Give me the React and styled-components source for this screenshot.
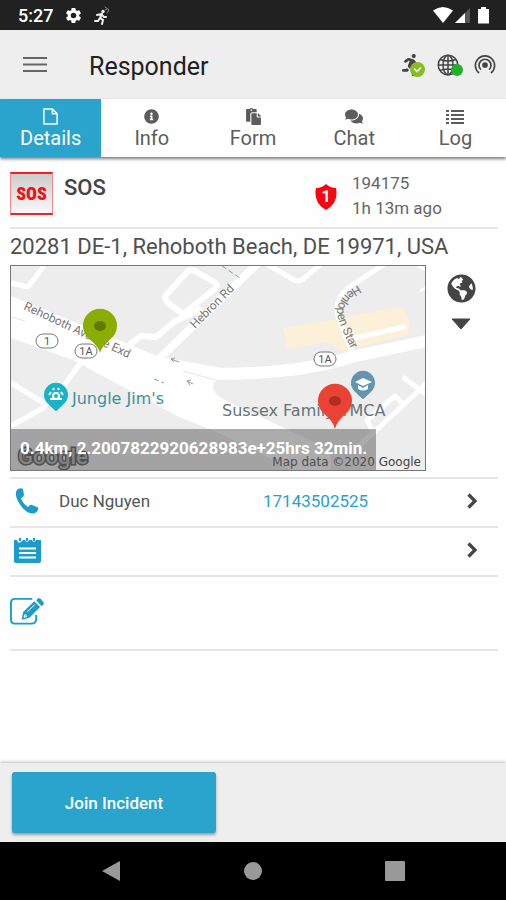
import { useState } from 'react';
import styled, { createGlobalStyle } from 'styled-components';
import { FaComments, FaGlobeAmericas, FaInfoCircle, FaPaste, FaRunning } from 'react-icons/fa';
import { MdSettings } from 'react-icons/md';

const GlobalStyle = createGlobalStyle`
  * {
    box-sizing: border-box;
  }

  body {
    margin: 0;
    background: #fefefe;
    color: #555;
    font-family: Roboto, "Liberation Sans", sans-serif;
  }

  button {
    padding: 0;
    border: none;
    background: none;
    color: inherit;
    font: inherit;
    cursor: pointer;
  }
`;

const Screen = styled.div`
  display: flex;
  flex-direction: column;
  min-height: 100vh;
`;

const StatusBar = styled.div`
  display: flex;
  align-items: center;
  gap: 11px;
  height: 30px;
  padding: 0 15px 0 18px;
  background: #212121;
  color: #fff;
`;

const Clock = styled.span`
  font-size: 18px;
  font-weight: 500;
`;

const StatusRight = styled.div`
  display: flex;
  align-items: center;
  margin-left: auto;
`;

const AppBar = styled.header`
  display: flex;
  align-items: center;
  height: 69px;
  padding: 0 10px 0 23px;
  background: #eee;
`;

const MenuButton = styled.button`
  display: flex;
  width: 24px;
  margin-right: 42px;
`;

const Title = styled.h1`
  margin: 3px 0 0;
  color: #212121;
  font-size: 25px;
  font-weight: 400;
`;

const BarIcons = styled.div`
  display: flex;
  gap: 15px;
  margin-left: auto;
`;

const BarButton = styled.button`
  position: relative;
  display: flex;
  color: #444;
`;

const StatusBadge = styled.span`
  position: absolute;
  right: ${props => (props.$small ? '-4px' : '-3px')};
  bottom: ${props => (props.$small ? '0' : '-1px')};
  display: flex;
  align-items: center;
  justify-content: center;
  width: ${props => (props.$small ? '12px' : '15px')};
  height: ${props => (props.$small ? '12px' : '15px')};
  border-radius: 50%;
  background: ${props => (props.$small ? '#1fb22c' : '#86be22')};
`;

const Tabs = styled.nav`
  position: relative;
  display: flex;
  height: 58px;
  background: #fff;
  box-shadow: 0 2px 3px rgba(0, 0, 0, 0.5);
`;

const Tab = styled.button`
  display: flex;
  flex: 1;
  flex-direction: column;
  align-items: center;
  padding-top: 9px;
  background: ${props => (props.$active ? '#2aa3cd' : '#fff')};
  color: ${props => (props.$active ? '#fff' : '#5c5c5c')};
  font-size: 20px;
  line-height: 26px;

  svg {
    height: 17px;
  }
`;

const Content = styled.main`
  flex: 1;
  padding: 0 8px 0 10px;
`;

const Summary = styled.section`
  display: flex;
  align-items: center;
  height: 72px;
  border-bottom: 2px solid #e6e6e6;
`;

const SosBadge = styled.div`
  display: flex;
  align-items: center;
  justify-content: center;
  width: 43px;
  height: 43px;
  margin-top: 3px;
  border: 1px solid #f58a8a;
  border-top: 2px solid #e22;
  border-bottom: 2px solid #e22;
  background: linear-gradient(#ccc, #f8f8f8);
  color: #f01018;
  font-family: "Roboto Condensed", Roboto, "Liberation Sans", sans-serif;
  font-size: 18px;
  font-weight: 900;
`;

const IncidentType = styled.h2`
  align-self: flex-start;
  flex: 1;
  margin: 18px 0 0 11px;
  color: #444;
  font-size: 22px;
  font-weight: 500;
  line-height: 26px;
`;

const Meta = styled.div`
  flex: none;
  width: 146px;
  margin: 8px 0 0 15px;
  color: #666;
  font-size: 17px;
  line-height: 25px;
`;

const ShieldBox = styled.span`
  display: flex;
  padding-top: 9px;
`;

const Address = styled.p`
  margin: 0;
  color: #505050;
  font-size: 22px;
  line-height: 36px;
`;

const MapRow = styled.section`
  display: flex;
  padding-bottom: 6px;
  border-bottom: 2px solid #e6e6e6;
`;

const MapFrame = styled.div`
  position: relative;
  flex: 1;
  border: 1px solid #777;

  > svg {
    display: block;
    width: 100%;
  }
`;

const Distance = styled.div`
  position: absolute;
  bottom: 0;
  left: 0;
  height: 41px;
  padding: 0 9px;
  background: rgba(90, 90, 90, 0.5);
  color: #fff;
  font-size: 17px;
  font-weight: 700;
  line-height: 38px;
  white-space: nowrap;
`;

const MapTools = styled.div`
  display: flex;
  flex-direction: column;
  align-items: center;
  gap: 15px;
  width: 72px;
  padding: 9px 2px 0 0;
  color: #444;

  button {
    display: flex;
  }
`;

const Row = styled.div`
  display: flex;
  align-items: center;
  height: ${props => (props.$tall ? '74px' : '49px')};
  padding: 0 20px 4px 0;
  border-bottom: 2px solid #e6e6e6;
  color: #555;
  font-size: 17px;
`;

const RowIcon = styled.span`
  display: flex;
  justify-content: ${props => (props.$edge ? 'flex-start' : 'center')};
  width: 34px;
  color: #1c9cc9;
`;

const ContactName = styled.span`
  flex: 1;
  margin-left: 15px;
`;

const ContactPhone = styled.a`
  flex: 1;
  color: #2b9fce;
  text-decoration: none;
`;

const RowButton = styled.button`
  display: flex;
  margin-left: auto;
`;

const Footer = styled.footer`
  height: 79px;
  padding: 9px 12px;
  background: #eee;
  box-shadow: 0 -1px 3px rgba(0, 0, 0, 0.25);
`;

const JoinButton = styled.button`
  width: 204px;
  height: 61px;
  border-radius: 3px;
  background: #2aa3cd;
  box-shadow: 0 2px 3px rgba(0, 0, 0, 0.35);
  color: #fff;
  font-size: 17px;
  font-weight: 500;
`;

const SystemNav = styled.div`
  position: relative;
  display: flex;
  align-items: center;
  justify-content: space-between;
  height: 58px;
  padding: 0 20%;
  background: #000;

  button {
    display: flex;
  }
`;

function MenuIcon() {
  return (
    <svg width="24" height="18" viewBox="0 0 24 18">
      <path d="M0 2h24M0 8.500h24M0 15h24" stroke="#666" strokeWidth="2.200" />
    </svg>
  );
}

function SignalRunnerIcon() {
  return (
    <svg width="16" height="19" viewBox="0 0 16 19" fill="none" stroke="#eee" strokeLinecap="round">
      <circle cx="9" cy="5.500" r="1.700" fill="#eee" stroke="none" />
      <path d="M8 8l-2 4 3 2-1 4M6 12l-2 3H1M3 9l4-1 3 3h2" strokeWidth="2" />
      <path d="M11 4l2-1M11 1l4 3-2 3" strokeWidth="1" stroke="#888" />
    </svg>
  );
}

function RadioIcons() {
  return (
    <svg width="58" height="20" viewBox="0 0 58 20">
      <path d="M0 5.500Q10-1.500 20 5.500L10 18z" fill="#fff" />
      <path d="M37 3v15H22z" fill="#555" />
      <path d="M32 8v10H22z" fill="#fff" />
      <path d="M48 2h5v2h3v14.500H45V4h3z" fill="#fff" />
    </svg>
  );
}

function GridGlobeIcon() {
  return (
    <svg width="22" height="22" viewBox="0 0 22 22" fill="none" stroke="currentColor" strokeWidth="1.500">
      <circle cx="11" cy="11" r="9.800" />
      <ellipse cx="11" cy="11" rx="5" ry="9.800" />
      <path d="M11 1v20M1 11h20M3 5.500q8 3 16 0M3 16.500q8-3 16 0" />
    </svg>
  );
}

function BeaconIcon() {
  return (
    <svg width="22" height="22" viewBox="0 0 22 22" fill="none" stroke="currentColor" strokeWidth="1.700">
      <path d="M5 19a9.600 9.600 0 1 1 12 0" />
      <path d="M7 15.700a6 6 0 1 1 8 0" />
      <circle cx="11" cy="11" r="2" fill="currentColor" />
    </svg>
  );
}

function FileIcon() {
  return (
    <svg width="17" height="18" viewBox="0 0 17 18" fill="none" stroke="currentColor" strokeWidth="1.600" strokeLinejoin="round">
      <path d="M1.500 1h9l5 5v11h-14zM10.500 1v5h5" />
    </svg>
  );
}

function ListIcon() {
  return (
    <svg width="18" height="17" viewBox="0 0 18 17" stroke="currentColor" strokeWidth="2">
      <path d="M0 3h3M0 7h3M0 11h3M0 15h3M5 3h13M5 7h13M5 11h13M5 15h13" />
    </svg>
  );
}

function ShieldIcon() {
  return (
    <svg width="22" height="26" viewBox="0 0 22 26">
      <path d="M11 0q4 4 10 4 3 15-10 22Q-2 19 1 4q6 0 10-4z" fill="#f90510" />
      <text x="11" y="18" textAnchor="middle" fill="#fff" fontSize="16" fontWeight="700">1</text>
    </svg>
  );
}

function CallIcon() {
  return (
    <svg width="24" height="26" viewBox="0 0 24 26" fill="currentColor">
      <path d="M3 1Q6-.5 8 1l1 6q0 2-3 3 2 6 7 9 2-3 4-2l5 2q2 1 1 3-1 3-4 3.500Q12 26 6.500 18.500 0 10 1 4q.5-2 2-3z" />
    </svg>
  );
}

function NotepadIcon() {
  return (
    <svg width="28" height="26" viewBox="0 0 28 26">
      <path d="M1 3h3q1 4 4 2l2-2h2q2 4 4 0h3q2 4 4 0h5v21q0 2-2 2H3q-2 0-2-2z" fill="currentColor" />
      <path d="M7 1v3M14 1v3M21 1v3" stroke="currentColor" strokeWidth="2" />
      <path d="M6 11.500h17M6 16h17M6 20.500h17" stroke="#fff" strokeWidth="2" />
    </svg>
  );
}

function EditIcon() {
  return (
    <svg width="35" height="28" viewBox="0 0 35 28" fill="none" stroke="currentColor">
      <path d="M23 1.500H5Q1 1.500 1 5.500v17Q1 27 5 27h17q5 0 5-5v-4" strokeWidth="2" />
      <path d="M12 23l1.500-8L25 4l6 6-11 11z" fill="currentColor" stroke="none" />
      <path d="M27 3l2-2q1-.5 2 0l3.500 4q.5 1 0 2l-2 2z" fill="currentColor" stroke="none" />
      <path d="M17.500 15l8-7.500M14.500 20.500l1-3 2 2z" stroke="#fff" />
    </svg>
  );
}

function ChevronIcon() {
  return (
    <svg width="11" height="16" viewBox="0 0 11 16" fill="none" stroke="#444" strokeWidth="3.200">
      <path d="M1.500 1.500L8 8l-6.500 6.500" />
    </svg>
  );
}

function Pin({ x, y, r, h, fill, dot }) {
  return (
    <g transform={`translate(${x} ${y})`}>
      <path
        d={`M0 ${h}Q-1 ${r + 4} ${-r * 0.75} ${r * 0.65}A${r} ${r} 0 1 1 ${r * 0.75} ${r * 0.65}Q1 ${r + 4} 0 ${h}z`}
        fill={fill}
      />
      {dot && <ellipse rx="6" ry="5" fill={dot} />}
    </g>
  );
}

function RouteShield({ x, y, label }) {
  return (
    <g>
      <rect x={x - 11} y={y - 7} width="22" height="14" rx="7" fill="#fff" stroke="#777" />
      <text x={x} y={y + 4} textAnchor="middle" fill="#555" fontSize="11">{label}</text>
    </g>
  );
}

function IncidentMap() {
  return (
    <svg viewBox="0 0 414 204" role="img" aria-label="Incident map">
      <rect width="414" height="204" fill="#ededed" />
      <path d="M272 62l120-21 6 14-1 14-67 16-16-9-38 7z" fill="#fdf0d9" />
      <g fill="none" stroke="#fff" strokeLinejoin="round">
        <path d="M0 17l17 4L33 0" strokeWidth="5" />
        <path d="M146 95L249-5" strokeWidth="8" />
        <path d="M177 5l-22 24q-2 4 2 8l15 11 32-25q4-4-1-7L184 5q-4-2-7 0z" strokeWidth="6" />
        <path d="M184 40l12 13M190 43l-17 8-10 5-18 15-15-1-12 9" strokeWidth="6" />
        <path d="M256-2l27 16q5 2 9-1l18-15" strokeWidth="5" />
        <path d="M375-3l-35 23q-18 12-13 30 8 22 17 43" strokeWidth="5" />
        <path d="M344 72l49-11" strokeWidth="5" strokeLinecap="round" />
        <path d="M403-2l12 6M409 25l6-3" strokeWidth="3" />
        <path d="M200 108q90 0 140-17l76-16" strokeWidth="12" />
        <path d="M73 92L52 121 32 142 0 160M0 117l33 20" strokeWidth="5" />
        <path d="M416 117L347 181M416 129l-24-18M361 164l-5-10 28-24 9 9" strokeWidth="5" />
      </g>
      <path d="M0 30l146 60 70 13v8q-14 2-14 10t18 16l100 47v20h-40q-60-34-112-53L62 94 0 72z" fill="#fff" />
      <path d="M0 51l14 4M172 105l36 10" stroke="#e4e4e4" />
      <g fill="none" stroke="#999">
        <path d="M160 93l8 3M160 93l4-1M160 93l3 3M176 115l6 3M176 115l4-1M176 115l3 4" />
        <path d="M143 113l10 4M211 0l18 12" stroke="#79a49a" strokeDasharray="5 3" />
      </g>
      <g fill="#777" fontSize="12">
        <text transform="translate(12 43) rotate(25)">Rehoboth Avenue Exd</text>
        <text transform="translate(184 63) rotate(-45)">Hebron Rd</text>
        <path id="henlopen" d="M347 19q-25 14-20 33 6 18 16 36" fill="none" />
        <text><textPath href="#henlopen">Henlopen Star</textPath></text>
      </g>
      <RouteShield x={36} y={75} label="1" />
      <RouteShield x={75} y={85} label="1A" />
      <RouteShield x={314} y={93} label="1A" />
      <g fontFamily="DejaVu Sans, sans-serif" fontSize="16">
        <text x="61" y="138" fill="#3a9499">Jungle Jim's</text>
        <text x="211" y="150" fill="#66747c">Sussex Family YMCA</text>
      </g>
      <Pin x={45} y={129} r={12} h={16} fill="#18b3c5" />
      <g fill="none" stroke="#fff" strokeWidth="2">
        <circle cx="45" cy="130" r="3" />
        <path d="M38 129l2-3M42 124l1-2M47 122l1 2M50 126l2 3M39 133h12" />
      </g>
      <Pin x={352} y={117} r={12} h={16} fill="#6495ae" />
      <path d="M344 116l8-4 9 4-9 4zM347 119v4q5 3 10 0v-4l-5 3z" fill="#fff" />
      <Pin x={89} y={60} r={17} h={27} fill="#8aad00" dot="#5f7a00" />
      <Pin x={324} y={135} r={17} h={28} fill="#ea4335" dot="#b02d22" />
      <text x="7" y="198" fill="#aaa" stroke="#444" strokeWidth="3" paintOrder="stroke" fontSize="22" fontWeight="500">Google</text>
      <text x="410" y="200" textAnchor="end" fill="#444" fontFamily="DejaVu Sans, sans-serif" fontSize="12">Map data ©2020 Google</text>
    </svg>
  );
}

const tabs = [
  { name: 'Details', icon: <FileIcon /> },
  { name: 'Info', icon: <FaInfoCircle size={15} /> },
  { name: 'Form', icon: <FaPaste size={17} /> },
  { name: 'Chat', icon: <FaComments size={18} /> },
  { name: 'Log', icon: <ListIcon /> },
];

function App() {
  const [activeTab, setActiveTab] = useState('Details');

  return (
    <Screen>
      <GlobalStyle />
      <StatusBar>
        <Clock>5:27</Clock>
        <MdSettings size={19} />
        <SignalRunnerIcon />
        <StatusRight>
          <RadioIcons />
        </StatusRight>
      </StatusBar>

      <AppBar>
        <MenuButton aria-label="Menu"><MenuIcon /></MenuButton>
        <Title>Responder</Title>
        <BarIcons>
          <BarButton aria-label="On duty">
            <FaRunning size={22} />
            <StatusBadge>
              <svg width="9" height="7" viewBox="0 0 9 7" fill="none" stroke="#fff" strokeWidth="1.600">
                <path d="M1 2.500L4 5.500 8 1.500" />
              </svg>
            </StatusBadge>
          </BarButton>
          <BarButton aria-label="Online">
            <GridGlobeIcon />
            <StatusBadge $small />
          </BarButton>
          <BarButton aria-label="Beacon"><BeaconIcon /></BarButton>
        </BarIcons>
      </AppBar>

      <Tabs>
        {tabs.map(tab => (
          <Tab key={tab.name} $active={tab.name === activeTab} onClick={() => setActiveTab(tab.name)}>
            {tab.icon}
            {tab.name}
          </Tab>
        ))}
      </Tabs>

      <Content>
        <Summary>
          <SosBadge>SOS</SosBadge>
          <IncidentType>SOS</IncidentType>
          <ShieldBox><ShieldIcon /></ShieldBox>
          <Meta>
            <div>194175</div>
            <div>1h 13m ago</div>
          </Meta>
        </Summary>

        <Address>20281 DE-1, Rehoboth Beach, DE 19971, USA</Address>
        <MapRow>
          <MapFrame>
            <IncidentMap />
            <Distance>0.4km, 2.2007822920628983e+25hrs 32min.</Distance>
          </MapFrame>
          <MapTools>
            <button aria-label="Open map"><FaGlobeAmericas size={29} /></button>
            <button aria-label="Show more">
              <svg width="20" height="12" viewBox="0 0 20 12">
                <path d="M1 1h18l-9 10z" fill="#444" stroke="#444" strokeLinejoin="round" />
              </svg>
            </button>
          </MapTools>
        </MapRow>

        <Row>
          <RowIcon><CallIcon /></RowIcon>
          <ContactName>Duc Nguyen</ContactName>
          <ContactPhone href="tel:17143502525">17143502525</ContactPhone>
          <RowButton aria-label="Open contact"><ChevronIcon /></RowButton>
        </Row>
        <Row>
          <RowIcon><NotepadIcon /></RowIcon>
          <RowButton aria-label="Open notes"><ChevronIcon /></RowButton>
        </Row>
        <Row $tall>
          <RowIcon $edge><EditIcon /></RowIcon>
        </Row>
      </Content>

      <Footer>
        <JoinButton>Join Incident</JoinButton>
      </Footer>

      <SystemNav>
        <button aria-label="Back">
          <svg width="20" height="22" viewBox="0 0 20 22"><path d="M19 1v20L1 11z" fill="#999" /></svg>
        </button>
        <button aria-label="Home">
          <svg width="20" height="20" viewBox="0 0 20 20"><circle cx="10" cy="10" r="9" fill="#999" /></svg>
        </button>
        <button aria-label="Recent apps">
          <svg width="20" height="20" viewBox="0 0 20 20"><rect width="20" height="20" rx="1" fill="#999" /></svg>
        </button>
      </SystemNav>
    </Screen>
  );
}

export default App;
